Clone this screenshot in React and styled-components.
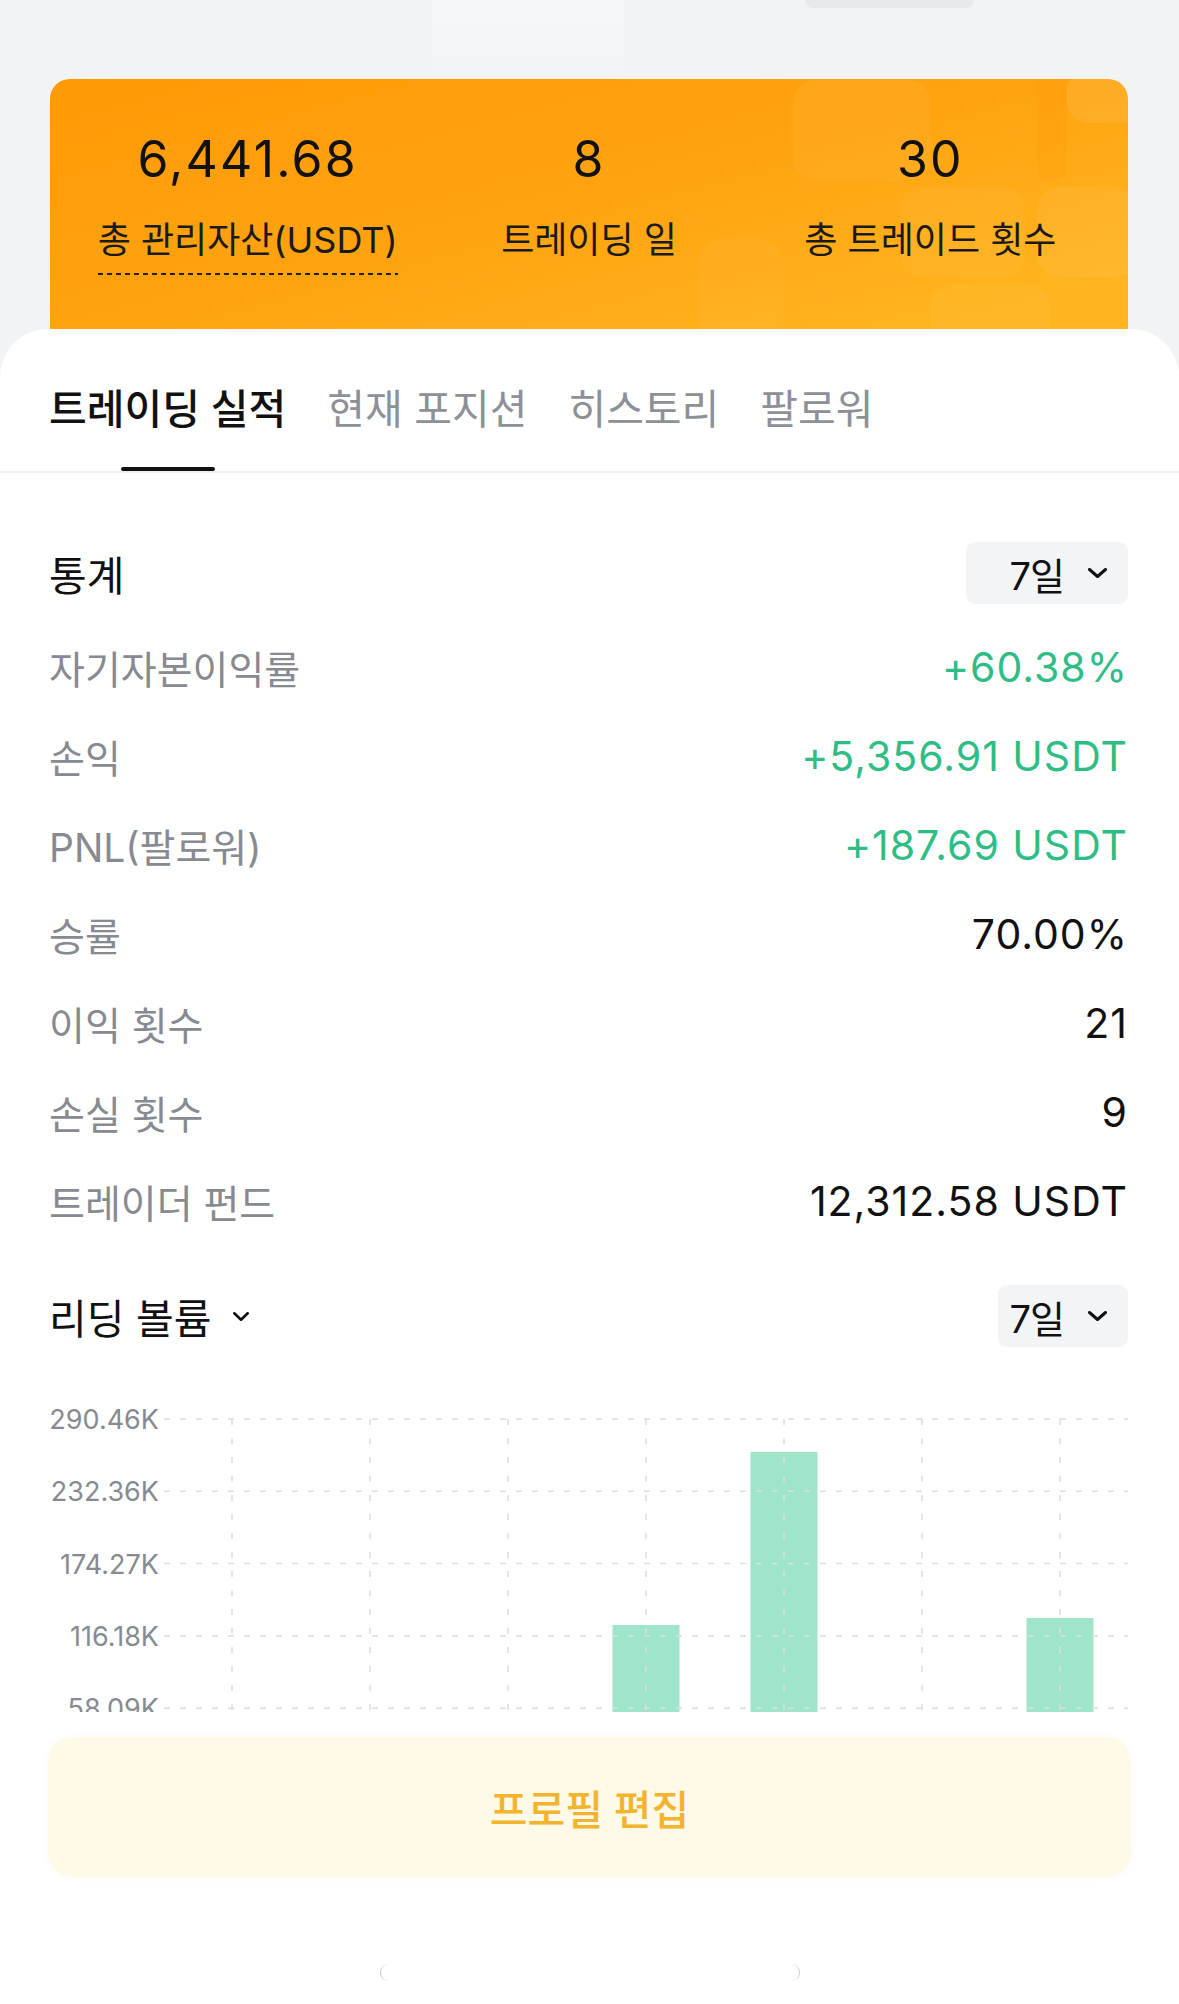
import React from "react";
import styled, { createGlobalStyle } from "styled-components";

const GlobalStyle = createGlobalStyle`
  html, body { margin: 0; padding: 0; background: #f2f3f5; }
  body {
    font-family: Inter, "Noto Sans CJK KR", sans-serif;
    -webkit-font-smoothing: antialiased;
  }
  #root { width: 1179px; height: 2004px; overflow: hidden; }
`;

const Page = styled.div`
  width: 1179px;
  height: 2004px;
  display: flex;
  flex-direction: column;
  background: #f2f3f5;
  overflow: hidden;
`;

const TopStrip = styled.div`
  height: 79px;
  flex-shrink: 0;
  display: flex;
  align-items: flex-start;
  padding-left: 432px;
`;

const GhostBlock = styled.div`
  width: 192px;
  height: 77px;
  background: linear-gradient(#f6f7f8, #f3f4f6);
  border-radius: 0 0 6px 6px;
`;

const GhostPill = styled.div`
  width: 169px;
  height: 8px;
  margin-left: 181px;
  background: #e8e9ec;
  border-radius: 0 0 8px 8px;
`;

const Card = styled.div`
  position: relative;
  flex-shrink: 0;
  height: 290px;
  margin: 0 51px 0 50px;
  border-radius: 20px 20px 0 0;
  overflow: hidden;
  background: linear-gradient(165deg, #ff9a06 0%, #ffa310 45%, #ffb51f 85%);
`;

const CardDeco = styled.svg`
  position: absolute;
  inset: 0;
  width: 100%;
  height: 100%;
`;

const StatGrid = styled.div`
  position: relative;
  display: grid;
  grid-template-columns: repeat(3, 1fr);
  padding: 50px 27px 0;
`;

const StatCell = styled.div`
  display: flex;
  flex-direction: column;
  align-items: center;
`;

const BigNumber = styled.div`
  font-size: 50px;
  line-height: 60px;
  letter-spacing: 2.2px;
  color: #111;
`;

const StatLabel = styled.div`
  margin-top: 29px;
  font-size: 36px;
  line-height: 44px;
  color: #1a1a1a;
  white-space: nowrap;
  padding-bottom: ${(p) => (p.$dotted ? "13px" : "0")};
  background: ${(p) =>
    p.$dotted
      ? "repeating-linear-gradient(to right, #2a2000 0 5px, transparent 5px 9px) left bottom / 100% 2px no-repeat"
      : "none"};
`;

const Panel = styled.div`
  position: relative;
  flex-shrink: 0;
  margin-top: -40px;
  background: #fff;
  border-radius: 48px 48px 0 0;
  display: flex;
  flex-direction: column;
`;

const TabBar = styled.div`
  display: flex;
  gap: 41px;
  padding: 0 49px;
  border-bottom: 2px solid #eeeff1;
`;

const Tab = styled.div`
  display: flex;
  flex-direction: column;
  align-items: center;
  padding-top: 54px;
  font-size: 41px;
  line-height: 52px;
  white-space: nowrap;
  color: ${(p) => (p.$active ? "#111" : "#8d9096")};
  font-weight: ${(p) => (p.$active ? 500 : 400)};
`;

const TabIndicator = styled.div`
  width: 94px;
  height: 4px;
  margin-top: 32px;
  border-radius: 2px;
  background: ${(p) => (p.$active ? "#111" : "transparent")};
`;

const Content = styled.div`
  display: flex;
  flex-direction: column;
  padding: 0 51px 0 49px;
`;

const SectionHeader = styled.div`
  display: flex;
  justify-content: space-between;
  align-items: center;
  margin-top: ${(p) => p.$top}px;
`;

const SectionTitle = styled.div`
  display: flex;
  align-items: center;
  gap: 22px;
  font-size: 41px;
  font-weight: 400;
  color: #111;
  white-space: nowrap;
`;

const Dropdown = styled.div`
  flex-shrink: 0;
  width: ${(p) => p.$w}px;
  height: 62px;
  box-sizing: border-box;
  border-radius: 9px;
  background: #f3f4f6;
  display: flex;
  align-items: center;
  justify-content: flex-end;
  gap: 24px;
  padding: 0 21px 0 0;
  font-size: 38px;
  letter-spacing: -1px;
  color: #111;
  white-space: nowrap;
`;

const Rows = styled.div`
  display: flex;
  flex-direction: column;
  margin-top: 18px;
`;

const StatRow = styled.div`
  height: 89px;
  display: flex;
  align-items: center;
  justify-content: space-between;
`;

const RowLabel = styled.div`
  font-size: 39px;
  color: #878a90;
  white-space: nowrap;
`;

const RowValue = styled.div`
  font-size: 41px;
  letter-spacing: 1px;
  color: ${(p) => (p.$green ? "#2ebd85" : "#111")};
  white-space: nowrap;
`;

const ChartBox = styled.div`
  margin-top: 52px;
  height: 313px;
  overflow: hidden;
`;

const BottomBar = styled.div`
  flex: 1;
  background: #fff;
  display: flex;
  flex-direction: column;
  align-items: center;
  padding-top: 25px;
`;

const EditButton = styled.div`
  width: 1083px;
  height: 140px;
  border-radius: 24px;
  background: #fffae8;
  box-shadow: 0 0 10px rgba(0, 0, 0, 0.025);
  display: flex;
  align-items: center;
  justify-content: center;
  font-size: 41px;
  font-weight: 500;
  color: #f2b42e;
`;

const HomeGhost = styled.div`
  margin-top: 87px;
  width: 420px;
  height: 17px;
  box-sizing: border-box;
  border-radius: 9px;
  border-left: 1.5px solid #c8c8c8;
  border-right: 1.5px solid #c8c8c8;
  background: #fff;
`;

const Chevron = ({ w = 19, h = 10, sw = 3 }) => (
  <svg width={w} height={h} viewBox={`0 0 ${w} ${h}`} fill="none">
    <path
      d={`M${sw / 2} ${sw / 2} L${w / 2} ${h - sw / 2} L${w - sw / 2} ${sw / 2}`}
      stroke="#111"
      strokeWidth={sw}
      strokeLinecap="round"
      strokeLinejoin="round"
    />
  </svg>
);

const rows = [
  { label: "자기자본이익률", value: "+60.38%", green: true },
  { label: "손익", value: "+5,356.91 USDT", green: true },
  { label: "PNL(팔로워)", value: "+187.69 USDT", green: true },
  { label: "승률", value: "70.00%" },
  { label: "이익 횟수", value: "21" },
  { label: "손실 횟수", value: "9" },
  { label: "트레이더 펀드", value: "12,312.58 USDT" },
];

const yLabels = ["290.46K", "232.36K", "174.27K", "116.18K", "58.09K"];
const gridY = [20, 92.3, 164.6, 236.9, 309.2];
const vertX = [183, 321, 459, 597, 735, 873, 1011];
const bars = [
  { cx: 597, top: 226 },
  { cx: 735, top: 53 },
  { cx: 1011, top: 219 },
];

const VolumeChart = () => (
  <svg width="1079" height="313" viewBox="0 0 1079 313">
    {bars.map((b, i) => (
      <rect key={i} x={b.cx - 33.5} y={b.top} width="67" height={313 - b.top} fill="#9fe5c9" />
    ))}
    {gridY.map((y, i) => (
      <g key={i}>
        <line x1="115" x2="1079" y1={y} y2={y} stroke="#dcdde0" strokeWidth="1.5" strokeDasharray="6 10" />
        <text
          x="110"
          y={y + 10}
          textAnchor="end"
          fontSize="27"
          fontFamily="Inter, sans-serif"
          fill="#878a90"
        >
          {yLabels[i]}
        </text>
      </g>
    ))}
    {vertX.map((x, i) => (
      <line key={i} x1={x} x2={x} y1="20" y2="313" stroke="#dcdde0" strokeWidth="1.5" strokeDasharray="6 13" />
    ))}
  </svg>
);

export default function App() {
  return (
    <>
      <GlobalStyle />
      <Page>
        <TopStrip>
          <GhostBlock />
          <GhostPill />
        </TopStrip>
        <Card>
          <CardDeco viewBox="0 0 1078 290" preserveAspectRatio="none">
            <rect x="743" y="1" width="137" height="100" rx="22" fill="#fff" fillOpacity="0.045" />
            <rect x="850" y="108" width="125" height="90" rx="22" fill="#fff" fillOpacity="0.045" />
            <rect x="987" y="108" width="100" height="90" rx="22" fill="#fff" fillOpacity="0.06" />
            <rect x="650" y="160" width="83" height="120" rx="22" fill="#fff" fillOpacity="0.035" />
            <rect x="1017" y="-10" width="80" height="54" rx="22" fill="#fff" fillOpacity="0.08" />
            <rect x="987" y="-10" width="30" height="110" rx="10" fill="#ff9800" fillOpacity="0.2" />
            <rect x="880" y="205" width="120" height="100" rx="22" fill="#fff" fillOpacity="0.04" />
          </CardDeco>
          <StatGrid>
            <StatCell>
              <BigNumber>6,441.68</BigNumber>
              <StatLabel $dotted>총 관리자산(USDT)</StatLabel>
            </StatCell>
            <StatCell>
              <BigNumber>8</BigNumber>
              <StatLabel>트레이딩 일</StatLabel>
            </StatCell>
            <StatCell>
              <BigNumber>30</BigNumber>
              <StatLabel>총 트레이드 횟수</StatLabel>
            </StatCell>
          </StatGrid>
        </Card>
        <Panel>
          <TabBar>
            {["트레이딩 실적", "현재 포지션", "히스토리", "팔로워"].map((t, i) => (
              <Tab key={t} $active={i === 0}>
                {t}
                <TabIndicator $active={i === 0} />
              </Tab>
            ))}
          </TabBar>
          <Content>
            <SectionHeader $top={69}>
              <SectionTitle>통계</SectionTitle>
              <Dropdown $w={162}>
                <span>7일</span>
                <Chevron />
              </Dropdown>
            </SectionHeader>
            <Rows>
              {rows.map((r) => (
                <StatRow key={r.label}>
                  <RowLabel>{r.label}</RowLabel>
                  <RowValue $green={r.green}>{r.value}</RowValue>
                </StatRow>
              ))}
            </Rows>
            <SectionHeader $top={40}>
              <SectionTitle>
                리딩 볼륨
                <Chevron w={16} h={9} sw={2.6} />
              </SectionTitle>
              <Dropdown $w={130}>
                <span>7일</span>
                <Chevron />
              </Dropdown>
            </SectionHeader>
            <ChartBox>
              <VolumeChart />
            </ChartBox>
          </Content>
        </Panel>
        <BottomBar>
          <EditButton>프로필 편집</EditButton>
          <HomeGhost />
        </BottomBar>
      </Page>
    </>
  );
}
